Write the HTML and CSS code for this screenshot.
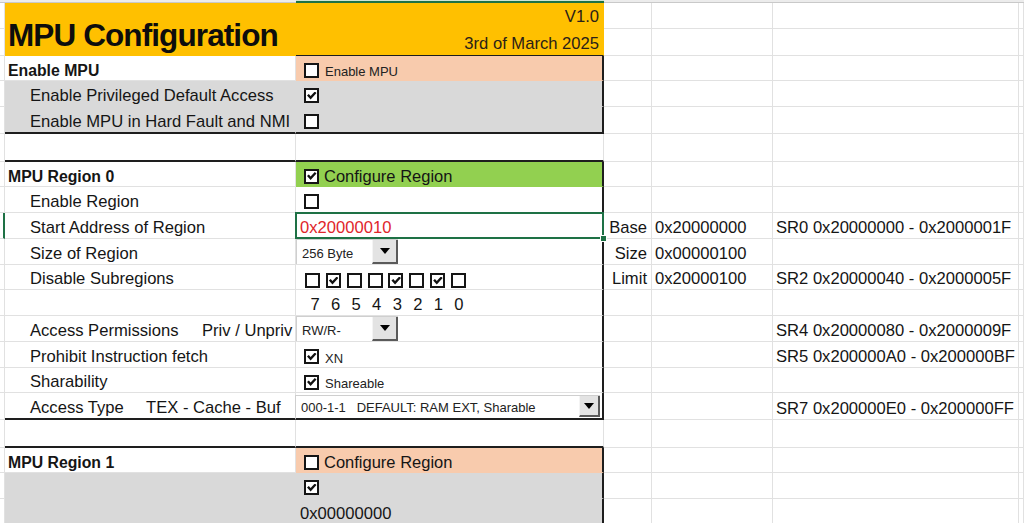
FILE: index.html
```html
<!DOCTYPE html>
<html lang="en">
<head>
<meta charset="utf-8">
<title>MPU Configuration</title>
<link rel="stylesheet" href="styles.css">
</head>
<body>
<div class="sheet">
  <!-- column header edge -->
  <div class="cell strip"></div><div class="cell strip"></div><div class="cell strip strip-on"></div><div class="cell strip"></div><div class="cell strip"></div><div class="cell strip"></div><div class="cell strip"></div>

  <!-- title rows -->
  <div class="cell a"></div>
  <div class="cell b y title">MPU Configuration</div>
  <div class="cell c y right">V1.0</div>
  <div class="cell"></div><div class="cell"></div><div class="cell"></div><div class="cell"></div>

  <div class="cell a"></div>
  <div class="cell c y right line-b1">3rd of March 2025</div>
  <div class="cell"></div><div class="cell"></div><div class="cell"></div><div class="cell"></div>

  <!-- Enable MPU -->
  <div class="cell a"></div>
  <div class="cell b bold">Enable MPU</div>
  <div class="cell c p br ctl"><span class="cb"></span><span class="small">Enable MPU</span></div>
  <div class="cell"></div><div class="cell"></div><div class="cell"></div><div class="cell"></div>

  <div class="cell a"></div>
  <div class="cell b g ind">Enable Privileged Default Access</div>
  <div class="cell c g br ctl"><span class="cb on"></span></div>
  <div class="cell"></div><div class="cell"></div><div class="cell"></div><div class="cell"></div>

  <div class="cell a"></div>
  <div class="cell b g ind bb">Enable MPU in Hard Fault and NMI</div>
  <div class="cell c g br bb ctl"><span class="cb"></span></div>
  <div class="cell"></div><div class="cell"></div><div class="cell"></div><div class="cell"></div>

  <div class="cell a"></div>
  <div class="cell b bb"></div>
  <div class="cell c bb"></div>
  <div class="cell"></div><div class="cell"></div><div class="cell"></div><div class="cell"></div>

  <!-- MPU Region 0 -->
  <div class="cell a"></div>
  <div class="cell b bold">MPU Region 0</div>
  <div class="cell c gr br ctl"><span class="cb on"></span><span class="big">Configure Region</span></div>
  <div class="cell"></div><div class="cell"></div><div class="cell"></div><div class="cell"></div>

  <div class="cell a"></div>
  <div class="cell b ind">Enable Region</div>
  <div class="cell c br ctl"><span class="cb"></span></div>
  <div class="cell"></div><div class="cell"></div><div class="cell"></div><div class="cell"></div>

  <div class="cell a rowsel"></div>
  <div class="cell b ind">Start Address of Region</div>
  <div class="cell c br sel red">0x20000010</div>
  <div class="cell d">Base</div>
  <div class="cell e">0x20000000</div>
  <div class="cell f">SR0 0x20000000 - 0x2000001F</div>
  <div class="cell"></div>

  <div class="cell a"></div>
  <div class="cell b ind">Size of Region</div>
  <div class="cell c br ddcell">
    <div class="dd"><span class="dd-text">256 Byte</span><span class="dd-btn"></span></div>
  </div>
  <div class="cell d">Size</div>
  <div class="cell e">0x00000100</div>
  <div class="cell f"></div>
  <div class="cell"></div>

  <div class="cell a"></div>
  <div class="cell b ind">Disable Subregions</div>
  <div class="cell c br subs">
    <span class="cb sm"></span><span class="cb sm on"></span><span class="cb sm"></span><span class="cb sm"></span><span class="cb sm on"></span><span class="cb sm"></span><span class="cb sm on"></span><span class="cb sm"></span>
  </div>
  <div class="cell d">Limit</div>
  <div class="cell e">0x20000100</div>
  <div class="cell f">SR2 0x20000040 - 0x2000005F</div>
  <div class="cell"></div>

  <div class="cell a"></div>
  <div class="cell b"></div>
  <div class="cell c br digits"><span>7</span><span>6</span><span>5</span><span>4</span><span>3</span><span>2</span><span>1</span><span>0</span></div>
  <div class="cell"></div><div class="cell"></div><div class="cell"></div><div class="cell"></div>

  <div class="cell a"></div>
  <div class="cell b ind"><span class="k1">Access Permissions</span><span>Priv / Unpriv</span></div>
  <div class="cell c br ddcell">
    <div class="dd"><span class="dd-text">RW/R-</span><span class="dd-btn"></span></div>
  </div>
  <div class="cell"></div>
  <div class="cell"></div>
  <div class="cell f">SR4 0x20000080 - 0x2000009F</div>
  <div class="cell"></div>

  <div class="cell a"></div>
  <div class="cell b ind">Prohibit Instruction fetch</div>
  <div class="cell c br ctl"><span class="cb on"></span><span class="small">XN</span></div>
  <div class="cell"></div>
  <div class="cell"></div>
  <div class="cell f">SR5 0x200000A0 - 0x200000BF</div>
  <div class="cell"></div>

  <div class="cell a"></div>
  <div class="cell b ind">Sharability</div>
  <div class="cell c br ctl"><span class="cb on"></span><span class="small">Shareable</span></div>
  <div class="cell"></div><div class="cell"></div><div class="cell"></div><div class="cell"></div>

  <div class="cell a"></div>
  <div class="cell b ind bb"><span class="k2">Access Type</span><span>TEX - Cache - Buf</span></div>
  <div class="cell c br bb ddcell">
    <div class="dd wide"><span class="dd-text">000-1-1   DEFAULT: RAM EXT, Sharable</span><span class="dd-btn"></span></div>
  </div>
  <div class="cell"></div>
  <div class="cell"></div>
  <div class="cell f">SR7 0x200000E0 - 0x200000FF</div>
  <div class="cell"></div>

  <div class="cell a"></div>
  <div class="cell b bb"></div>
  <div class="cell c bb"></div>
  <div class="cell"></div><div class="cell"></div><div class="cell"></div><div class="cell"></div>

  <!-- MPU Region 1 -->
  <div class="cell a"></div>
  <div class="cell b bold">MPU Region 1</div>
  <div class="cell c p br ctl"><span class="cb"></span><span class="big">Configure Region</span></div>
  <div class="cell"></div><div class="cell"></div><div class="cell"></div><div class="cell"></div>

  <div class="cell a"></div>
  <div class="cell b g"></div>
  <div class="cell c g br ctl"><span class="cb on"></span></div>
  <div class="cell"></div><div class="cell"></div><div class="cell"></div><div class="cell"></div>

  <div class="cell a"></div>
  <div class="cell b g"></div>
  <div class="cell c g br">0x00000000</div>
  <div class="cell"></div><div class="cell"></div><div class="cell"></div><div class="cell"></div>
</div>
</body>
</html>
```

FILE: styles.css
```css
:root {
  --grid: #e1e1e1;
  --yellow: #ffc000;
  --peach: #f8cbad;
  --gray: #d9d9d9;
  --green: #92d050;
  --line: #1e1e1e;
  --sel: #1e7145;
}

html, body {
  margin: 0;
  background: #fff;
  overflow: hidden;
}

body {
  font-family: "Liberation Sans", Arial, sans-serif;
  font-size: 16.6px;
  color: #151515;
}

.sheet {
  display: grid;
  grid-template-columns: 5px 291px 308px 48px 121px 246px 1fr;
  grid-template-rows: 3px 26px 27px 25px 26px 27px 28px 25px 26px 26px 26px 25px 26px 26px 26px 25px 27px 28px 25px 26px 26px;
  width: 1024px;
  height: 523px;
  overflow: hidden;
}

.cell {
  box-sizing: border-box;
  border-right: 1px solid var(--grid);
  border-bottom: 1px solid var(--grid);
  display: flex;
  align-items: flex-end;
  padding-bottom: 0;
  white-space: pre;
  min-width: 0;
}

.strip {
  padding: 0;
  border-right: none;
  background: #ececec;
  border-bottom: 1px solid #c9c9c9;
}
.strip-on {
  background: #cfe4d6;
  border-bottom: 2px solid var(--sel);
}

.a { padding: 0; }
.rowsel { border-right: 2px solid var(--sel); }

.b { padding-left: 3px; }
.ind { padding-left: 25px; }
.c { padding-left: 4px; }
.d { justify-content: flex-end; padding-right: 4px; }
.e { padding-left: 3px; }
.f { padding-left: 3px; }

.bold {
  font-weight: bold;
  font-size: 15.8px;
}

.title {
  grid-row: span 2;
  font-weight: bold;
  font-size: 31.5px;
  letter-spacing: -0.9px;
  line-height: 1;
  padding-bottom: 4px;
  color: #0d0d0d;
  border-bottom: 1px solid var(--line);
}

.right {
  justify-content: flex-end;
  padding-right: 4px;
  padding-bottom: 1px;
  color: #2a2118;
}

/* fills */
.y { background: var(--yellow); border-color: var(--yellow); }
.p { background: var(--peach); border-color: var(--peach); }
.g { background: var(--gray); border-color: var(--gray); }
.gr { background: var(--green); border-color: var(--green); }

/* heavy borders */
.line-b1 { border-bottom: 1px solid var(--line); }
.bb { border-bottom: 2px solid var(--line); }
.br { border-right: 2px solid var(--line); }

.red { color: #e0262b; }

/* selected cell */
.sel { position: relative; }
.sel::after {
  content: "";
  position: absolute;
  left: -1px;
  top: -1px;
  right: -2px;
  bottom: -1px;
  border: 2px solid var(--sel);
}
.sel::before {
  content: "";
  position: absolute;
  right: -5px;
  bottom: -4px;
  width: 5px;
  height: 5px;
  background: var(--sel);
  border: 1px solid #fff;
  z-index: 2;
}

/* form controls */
.ctl { padding-left: 8px; }

.cb {
  box-sizing: border-box;
  width: 15px;
  height: 15px;
  border: 2px solid #151515;
  background: #fff;
  position: relative;
  flex: none;
  align-self: center;
  margin-top: 4px;
}
.cb.on::after {
  content: "";
  position: absolute;
  left: 1px;
  top: 1.5px;
  width: 9.5px;
  height: 8px;
  background: #111;
  clip-path: polygon(0 50%, 19% 31%, 38% 55%, 82% 0, 100% 20%, 38% 100%);
}

.small {
  font-size: 13px;
  margin-left: 6px;
  color: #222;
  padding-bottom: 1px;
}
.big {
  font-size: 16.5px;
  margin-left: 5px;
}

.subs {
  display: grid;
  grid-template-columns: repeat(8, 15px);
  column-gap: 5.86px;
  align-items: end;
  align-content: end;
  padding-left: 9px;
  padding-bottom: 1px;
}
.cb.sm {
  width: 15px;
  height: 15px;
  margin: 0;
  align-self: end;
}

.digits {
  display: grid;
  grid-template-columns: repeat(8, 14px);
  column-gap: 6.57px;
  align-content: end;
  padding-left: 12px;
  justify-items: center;
}

.ddcell {
  padding: 0;
  align-items: stretch;
}
.dd {
  box-sizing: border-box;
  display: flex;
  width: 102px;
  background: #fff;
  border-top: 1px solid #cfcfcf;
  border-left: 1px solid #cfcfcf;
}
.dd.wide { width: 305px; margin-left: -1px; margin-top: 2px; margin-bottom: 1px; }
.dd-text {
  flex: 1;
  display: flex;
  align-items: center;
  padding-left: 5px;
  padding-top: 2px;
  font-size: 13px;
  color: #222;
  overflow: hidden;
}
.dd-btn {
  box-sizing: border-box;
  width: 26px;
  flex: none;
  background: #e3e3e3;
  border-left: 1px solid #f4f4f4;
  border-right: 2px solid #5a5a5a;
  border-bottom: 2px solid #5a5a5a;
  display: flex;
  align-items: center;
  justify-content: center;
}
.dd.wide .dd-btn { width: 21px; }
.dd-btn::after {
  content: "";
  width: 0;
  height: 0;
  border-left: 5.5px solid transparent;
  border-right: 5.5px solid transparent;
  border-top: 6px solid #000;
}

.k1 { width: 172px; }
.k2 { width: 116px; }
```
